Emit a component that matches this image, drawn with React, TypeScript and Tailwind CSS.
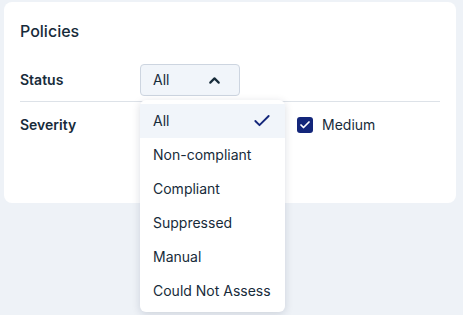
import { Check, ChevronUp } from 'lucide-react'

const options = ['All', 'Non-compliant', 'Compliant', 'Suppressed', 'Manual', 'Could Not Assess']

function Checkbox({ label, checked }: { label: string; checked?: boolean }) {
  return (
    <label className="flex items-center gap-[9px] text-sm text-[#172b3a]">
      <span
        className={
          checked
            ? 'flex h-4 w-4 items-center justify-center rounded-[3px] bg-[#13267a]'
            : 'h-4 w-4 rounded-[3px] border border-[#9aa5b4] bg-white'
        }
      >
        {checked && <Check className="h-3 w-3 text-white" strokeWidth={3.5} />}
      </span>
      {label}
    </label>
  )
}

export default function App() {
  return (
    <div
      className="relative h-[315px] w-[463px] bg-[#eef2f7] pt-[2px] pl-1"
      style={{ fontFamily: 'Inter, "Noto Sans", sans-serif' }}
    >
      {/* Card */}
      <div className="h-[201px] w-[452px] rounded-lg bg-white px-4 pt-[19px]">
        <h2 className="text-base font-medium leading-5 text-[#172b3a]">Policies</h2>

        <div className="mt-[23px] flex items-center pb-[5px]">
          <span className="w-[120px] text-sm font-semibold text-[#172b3a]">Status</span>
          <button className="flex h-8 w-[100px] items-center justify-between rounded border border-[#cdd5e0] bg-[#f1f5fa] pl-3 pr-4 text-sm text-[#172b3a]">
            All
            <ChevronUp className="h-[17px] w-[17px] text-[#172b3a]" strokeWidth={3} />
          </button>
        </div>
        <div className="border-t border-[#dde2e8]" />

        <div className="flex items-center pt-[13px]">
          <span className="w-[120px] text-sm font-semibold text-[#172b3a]">Severity</span>
          <div className="ml-[157px] flex">
            <Checkbox label="Medium" checked />
          </div>
        </div>
      </div>

      {/* Open dropdown */}
      <ul className="absolute left-[140px] top-[100px] w-[145px] rounded-md bg-white py-1 shadow-[0_2px_8px_rgba(15,30,60,0.15)]">
        {options.map((o, i) => (
          <li
            key={o}
            className={
              'flex h-[34px] items-center justify-between pl-[13px] pr-[13px] text-sm text-[#172b3a] ' +
              (i === 0 ? 'bg-[#f1f5fa]' : '')
            }
          >
            {o}
            {i === 0 && <Check className="h-5 w-5 text-[#13267a]" strokeWidth={2.25} />}
          </li>
        ))}
      </ul>
    </div>
  )
}
